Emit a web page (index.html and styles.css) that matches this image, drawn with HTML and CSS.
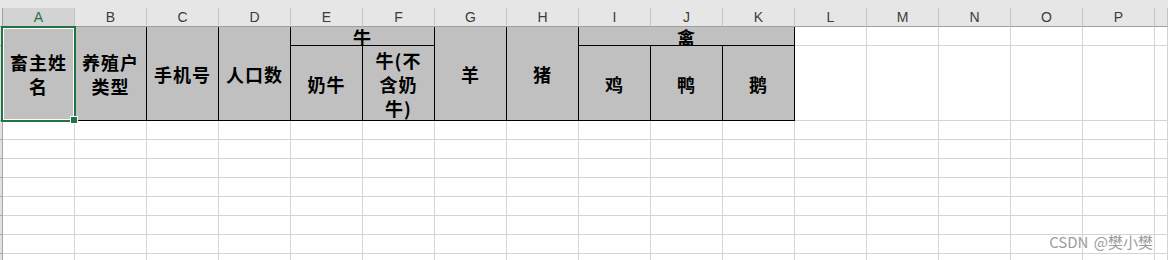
FILE: index.html
```html
<!DOCTYPE html>
<html lang="zh-CN">
<head>
<meta charset="utf-8">
<title>养殖户信息登记表</title>
<link rel="stylesheet" href="styles.css">
</head>
<body>
<div class="sheet">
  <!-- formula bar edge -->
  <div class="strip"></div>

  <!-- column headers -->
  <div class="corner"></div>
  <div class="colhead is-active">A</div>
  <div class="colhead">B</div>
  <div class="colhead">C</div>
  <div class="colhead">D</div>
  <div class="colhead">E</div>
  <div class="colhead">F</div>
  <div class="colhead">G</div>
  <div class="colhead">H</div>
  <div class="colhead">I</div>
  <div class="colhead">J</div>
  <div class="colhead">K</div>
  <div class="colhead">L</div>
  <div class="colhead">M</div>
  <div class="colhead">N</div>
  <div class="colhead">O</div>
  <div class="colhead">P</div>
  <div class="colhead"></div>

  <!-- row 1 -->
  <div class="rowhead"></div>
  <div class="t rows2">畜主姓<br>名</div>
  <div class="t rows2">养殖户<br>类型</div>
  <div class="t rows2">手机号</div>
  <div class="t rows2">人口数</div>
  <div class="t cols2">牛</div>
  <div class="t rows2">羊</div>
  <div class="t rows2">猪</div>
  <div class="t cols3">禽</div>
  <div class="c"></div><div class="c"></div><div class="c"></div><div class="c"></div><div class="c"></div><div class="c"></div>

  <!-- row 2 -->
  <div class="rowhead"></div>
  <div class="t">奶牛</div>
  <div class="t">牛(不<br>含奶<br>牛)</div>
  <div class="t">鸡</div>
  <div class="t">鸭</div>
  <div class="t">鹅</div>
  <div class="c"></div><div class="c"></div><div class="c"></div><div class="c"></div><div class="c"></div><div class="c"></div>

  <!-- empty rows -->
  <div class="rowhead"></div>
  <div class="c"></div><div class="c"></div><div class="c"></div><div class="c"></div><div class="c"></div><div class="c"></div><div class="c"></div><div class="c"></div><div class="c"></div><div class="c"></div><div class="c"></div><div class="c"></div><div class="c"></div><div class="c"></div><div class="c"></div><div class="c"></div><div class="c"></div>
  <div class="rowhead"></div>
  <div class="c"></div><div class="c"></div><div class="c"></div><div class="c"></div><div class="c"></div><div class="c"></div><div class="c"></div><div class="c"></div><div class="c"></div><div class="c"></div><div class="c"></div><div class="c"></div><div class="c"></div><div class="c"></div><div class="c"></div><div class="c"></div><div class="c"></div>
  <div class="rowhead"></div>
  <div class="c"></div><div class="c"></div><div class="c"></div><div class="c"></div><div class="c"></div><div class="c"></div><div class="c"></div><div class="c"></div><div class="c"></div><div class="c"></div><div class="c"></div><div class="c"></div><div class="c"></div><div class="c"></div><div class="c"></div><div class="c"></div><div class="c"></div>
  <div class="rowhead"></div>
  <div class="c"></div><div class="c"></div><div class="c"></div><div class="c"></div><div class="c"></div><div class="c"></div><div class="c"></div><div class="c"></div><div class="c"></div><div class="c"></div><div class="c"></div><div class="c"></div><div class="c"></div><div class="c"></div><div class="c"></div><div class="c"></div><div class="c"></div>
  <div class="rowhead"></div>
  <div class="c"></div><div class="c"></div><div class="c"></div><div class="c"></div><div class="c"></div><div class="c"></div><div class="c"></div><div class="c"></div><div class="c"></div><div class="c"></div><div class="c"></div><div class="c"></div><div class="c"></div><div class="c"></div><div class="c"></div><div class="c"></div><div class="c"></div>
  <div class="rowhead"></div>
  <div class="c"></div><div class="c"></div><div class="c"></div><div class="c"></div><div class="c"></div><div class="c"></div><div class="c"></div><div class="c"></div><div class="c"></div><div class="c"></div><div class="c"></div><div class="c"></div><div class="c"></div><div class="c"></div><div class="c"></div><div class="c"></div><div class="c"></div>
  <div class="rowhead"></div>
  <div class="c"></div><div class="c"></div><div class="c"></div><div class="c"></div><div class="c"></div><div class="c"></div><div class="c"></div><div class="c"></div><div class="c"></div><div class="c"></div><div class="c"></div><div class="c"></div><div class="c"></div><div class="c"></div><div class="c"></div><div class="c"></div><div class="c"></div>
  <div class="rowhead"></div>
  <div class="c"></div><div class="c"></div><div class="c"></div><div class="c"></div><div class="c"></div><div class="c"></div><div class="c"></div><div class="c"></div><div class="c"></div><div class="c"></div><div class="c"></div><div class="c"></div><div class="c"></div><div class="c"></div><div class="c"></div><div class="c"></div><div class="c"></div>

  <!-- active cell A1:A2 -->
  <div class="selection"><span class="handle"></span></div>

  <div class="watermark">CSDN @樊小樊</div>
</div>
</body>
</html>
```

FILE: styles.css
```css
* {
  box-sizing: border-box;
}

html,
body {
  margin: 0;
  padding: 0;
  background: #ffffff;
}

body {
  width: 1168px;
  height: 260px;
  overflow: hidden;
}

.sheet {
  position: relative;
  display: grid;
  grid-template-columns: 3px repeat(16, 72px) 1fr;
  grid-template-rows: 8px 19px 19px 75px repeat(8, 19px);
  width: 1168px;
  font-family: "Noto Sans CJK SC", "Noto Sans", sans-serif;
}

.strip {
  grid-column: 1 / -1;
  background: #e6e6e6;
}

/* column header bar */
.corner,
.colhead {
  background: #e6e6e6;
  border-bottom: 1px solid #9e9e9e;
}

.corner {
  border-right: 1px solid #9e9e9e;
}

.colhead {
  border-right: 1px solid #c4c4c4;
  font-family: "Liberation Sans", Arial, sans-serif;
  font-size: 14px;
  line-height: 18px;
  color: #3c3c3c;
  text-align: center;
}

.colhead.is-active {
  background: #d3d3d3;
  color: #217346;
}

/* row header edge */
.rowhead {
  background: #e1e1e1;
  border-right: 1px solid #a8a8a8;
  border-bottom: 1px solid #a8a8a8;
}

/* plain cells */
.c {
  border-right: 1px solid #d4d4d4;
  border-bottom: 1px solid #d4d4d4;
}

/* bordered, shaded table cells */
.t {
  display: flex;
  align-items: center;
  justify-content: center;
  background: #c0c0c0;
  border-right: 1px solid #000000;
  border-bottom: 1px solid #000000;
  color: #000000;
  font-size: 18px;
  font-weight: 700;
  line-height: 24px;
  letter-spacing: 1px;
  text-align: center;
  white-space: nowrap;
  padding-top: 1px;
}

.rows2 {
  grid-row: span 2;
}

.cols2 {
  grid-column: span 2;
}

.cols3 {
  grid-column: span 3;
}

.selection {
  position: absolute;
  left: 1px;
  top: 26px;
  width: 75px;
  height: 96px;
  border: 2px solid #217346;
  box-shadow: inset 0 0 0 1px #ffffff;
  pointer-events: none;
}

.handle {
  position: absolute;
  right: -4px;
  bottom: -4px;
  width: 8px;
  height: 8px;
  background: #217346;
  border: 1px solid #ffffff;
}

.watermark {
  position: absolute;
  right: 15px;
  top: 232px;
  font-family: "Noto Sans CJK SC", "Noto Sans", sans-serif;
  font-size: 15px;
  line-height: 20px;
  word-spacing: 2px;
  color: #9c9c9c;
  white-space: nowrap;
}
```
